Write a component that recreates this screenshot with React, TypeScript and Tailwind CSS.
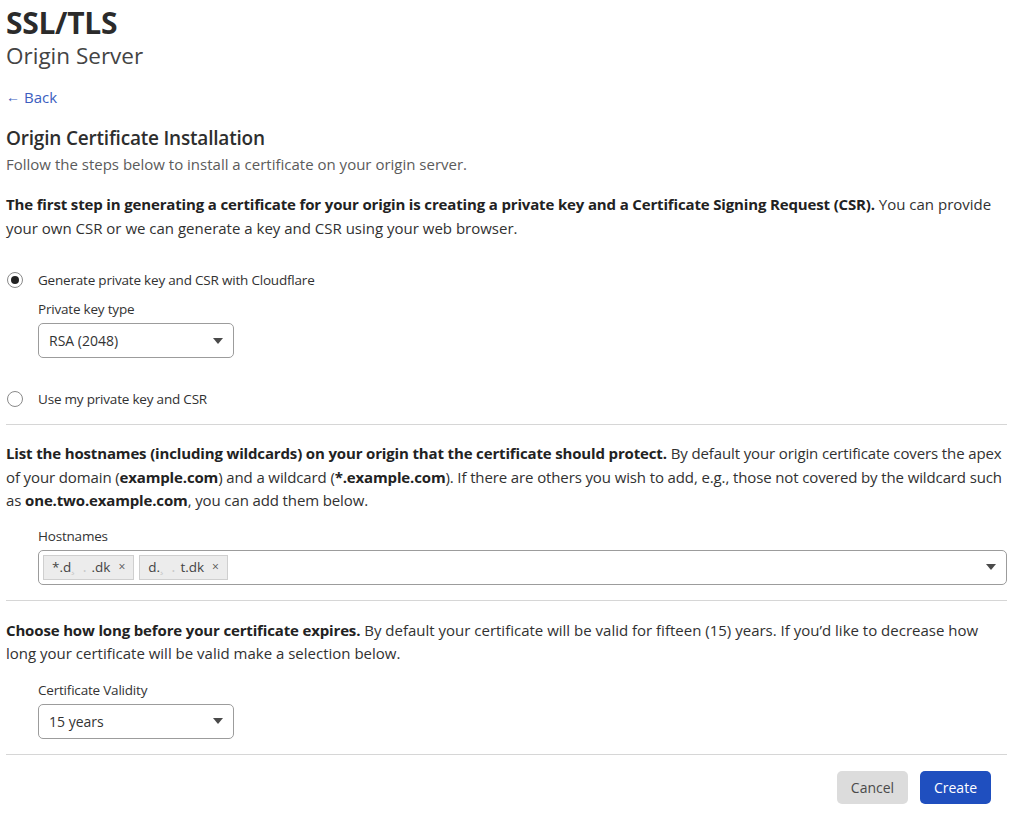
import { useState } from "react";

const Caret = () => (
  <svg width="10" height="6" viewBox="0 0 10 6" className="shrink-0">
    <path d="M0 0h10L5 6z" fill="#4a4a4a" />
  </svg>
);

const Radio = ({ checked }: { checked: boolean }) => (
  <span className="w-[16px] h-[16px] rounded-full border border-[#8a8a8a] bg-white flex items-center justify-center shrink-0">
    {checked && <span className="w-[8px] h-[8px] rounded-full bg-[#222]" />}
  </span>
);

const Select = ({ value }: { value: string }) => (
  <div className="w-[196px] h-[35px] border border-[#9c9c9c] rounded-[5px] flex items-center justify-between pl-[10px] pr-[10px] text-[14px] text-[#333]">
    <span>{value}</span>
    <Caret />
  </div>
);

const Tag = ({ pre, post }: { pre: string; post: string }) => (
  <span className="h-[25px] bg-[#ececec] border border-[#cfcfcf] flex items-center px-[8px] text-[13.5px] text-[#444]">
    {pre}
    <span className="text-[#c8c8c8]">{"\u00b8\u00a0\u00a0\u2024\u00a0"}</span>
    {post}
    <span className="ml-[8px] text-[12px] text-[#555]">×</span>
  </span>
);

const B = ({ children }: { children: React.ReactNode }) => (
  <b className="font-bold text-[#222] tracking-[-0.15px]">{children}</b>
);

export default function App() {
  const [mode, setMode] = useState("generate");

  return (
    <div
      className="w-[1024px] h-[819px] bg-white text-[#313131] pl-[6px] pr-[17px] overflow-hidden"
      style={{ fontFamily: '"Open Sans", "Noto Sans", sans-serif' }}
    >
      <h1 className="text-[30px] font-bold leading-[36px] pt-[5px] text-[#2b2b2b] tracking-[-0.3px]">SSL/TLS</h1>
      <div className="text-[22.5px] leading-[30px] text-[#444]">Origin Server</div>

      <a className="mt-[15px] flex items-center gap-[4px] text-[15px] text-[#3c5ec0] leading-[22px]">
        <span className="text-[14px]">←</span> Back
      </a>

      <h2 className="mt-[17px] text-[19px] font-semibold leading-[26px] text-[#2e2e2e] tracking-[-0.2px]">
        Origin Certificate Installation
      </h2>
      <p className="mt-[2px] text-[15px] text-[#5b5b5b] leading-[22px]">
        Follow the steps below to install a certificate on your origin server.
      </p>

      <p className="mt-[17px] text-[15px] leading-[24px]">
        <B>
          The first step in generating a certificate for your origin is creating a private key and a Certificate Signing Request (CSR).
        </B>{" "}
        You can provide your own CSR or we can generate a key and CSR using your web browser.
      </p>

      <div className="mt-[30px] flex flex-col">
        <label className="flex items-center gap-[15px] pl-[1px] text-[13.5px] leading-[20px] tracking-[-0.2px]" onClick={() => setMode("generate")}>
          <Radio checked={mode === "generate"} />
          Generate private key and CSR with Cloudflare
        </label>
        <div className="pl-[32px] mt-[9px]">
          <div className="text-[13.5px] leading-[20px] tracking-[-0.2px] text-[#333]">Private key type</div>
          <div className="mt-[4px]">
            <Select value="RSA (2048)" />
          </div>
        </div>
        <label className="mt-[31px] flex items-center gap-[15px] pl-[1px] text-[13.5px] leading-[20px] tracking-[-0.2px]" onClick={() => setMode("own")}>
          <Radio checked={mode === "own"} />
          Use my private key and CSR
        </label>
      </div>

      <hr className="mt-[15px] border-t border-[#d6d6d6]" />

      <p className="mt-[17px] text-[15px] leading-[23.5px] tracking-[-0.12px]">
        <B>List the hostnames (including wildcards) on your origin that the certificate should protect.</B>{" "}
        By default your origin certificate covers the apex of your domain (<B>example.com</B>) and a wildcard (
        <B>*.example.com</B>). If there are others you wish to add, e.g., those not covered by the wildcard such as{" "}
        <B>one.two.example.com</B>, you can add them below.
      </p>

      <div className="pl-[32px] mt-[13px]">
        <div className="text-[13.5px] leading-[20px] tracking-[-0.2px] text-[#333]">Hostnames</div>
        <div className="mt-[4px] h-[35px] border border-[#9c9c9c] rounded-[5px] flex items-center justify-between pl-[4px] pr-[10px]">
          <div className="flex gap-[5px]">
            <Tag pre="*.d" post=".dk" />
            <Tag pre="d." post="t.dk" />
          </div>
          <Caret />
        </div>
      </div>

      <hr className="mt-[15px] border-t border-[#d6d6d6]" />

      <p className="mt-[18px] text-[15px] leading-[23.5px]">
        <B>Choose how long before your certificate expires.</B> By default your certificate will be valid for fifteen (15) years. If you’d like to decrease how long your certificate will be valid make a selection below.
      </p>

      <div className="pl-[32px] mt-[14px]">
        <div className="text-[13.5px] leading-[20px] tracking-[-0.2px] text-[#333]">Certificate Validity</div>
        <div className="mt-[4px]">
          <Select value="15 years" />
        </div>
      </div>

      <hr className="mt-[15px] border-t border-[#d6d6d6]" />

      <div className="mt-[16px] flex justify-end gap-[12px] pr-[16px]">
        <button className="h-[33px] w-[71px] rounded-[5px] bg-[#dcdcdc] text-[14px] text-[#4a4a4a]">Cancel</button>
        <button className="h-[33px] w-[71px] rounded-[5px] bg-[#1f4fbf] text-[14px] text-white">Create</button>
      </div>
    </div>
  );
}
